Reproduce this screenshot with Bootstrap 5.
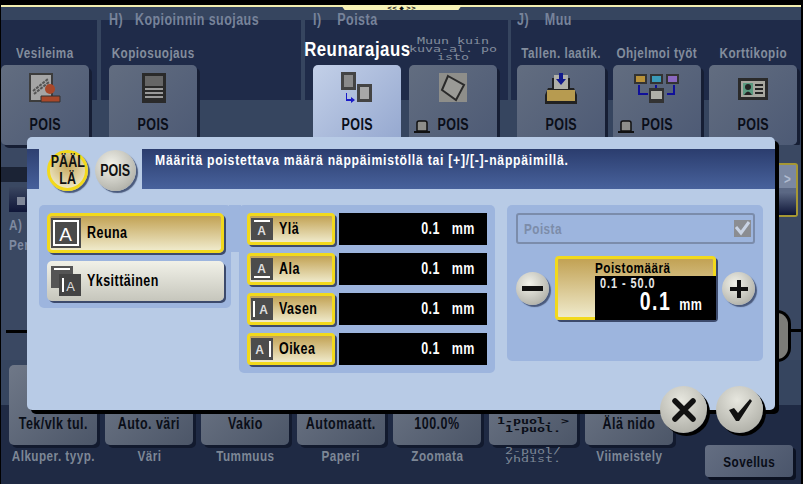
<!DOCTYPE html>
<html lang="fi">
<head>
<meta charset="UTF-8">
<title>Reunarajaus</title>
<link href="https://cdn.jsdelivr.net/npm/bootstrap@5.3.3/dist/css/bootstrap.min.css" rel="stylesheet">
<style>
  html, body { margin: 0; width: 803px; height: 484px; overflow: hidden; background: #000; }
  body { font-family: "Liberation Sans", sans-serif; font-weight: 700; font-size: 15px; letter-spacing: .6px; line-height: 1; }
  /* no narrow face installed, so the panel font is squeezed */
  .tx { display: inline-block; flex: none; white-space: nowrap; transform: scaleX(.78); }
  .tx-l { transform-origin: left center; }
  .tx-r { transform-origin: right center; }
  .screen { position: relative; width: 801px; height: 484px; padding-left: 1px; padding-top: 5px; background: #000; }
  .topline { height: 2px; background: #f3eeb0; }
  .handle { position: absolute; left: 341px; top: 5px; width: 121px; height: 5px; background: #f7f2b4; clip-path: polygon(0 0, 100% 0, 97% 100%, 3% 100%); color: #111; font: 700 6px/5px "DejaVu Sans", sans-serif; letter-spacing: 0; text-align: center; }
  .uplayer { height: 138px; background: #36455f; }
  .tabgrp { height: 138px; background: linear-gradient(#36455f 0 13px, #1f2b49 13px 93px, transparent 93px); }
  .g0 { width: 96px; } .g1 { width: 200px; margin-left: 4px; padding-left: 8px; } .g2 { width: 203px; margin-left: 4px; padding-left: 8px; } .g3 { width: 290px; margin-left: 3px; padding-left: 6px; }
  .grphead { height: 27px; color: #77839a; font-size: 16px; padding-top: 5px; }
  .fcol { width: 88px; flex: none; }
  .funcname { height: 31px; color: #838d9d; display: flex; justify-content: center; padding-top: 11px; }
  .funcname.active { color: #fff; font-size: 20px; padding-top: 5px; }
  .funcname.active .tx { transform: scaleX(.84); }
  .funcname.pix { display: block; text-align: center; font: 400 9px/8px "DejaVu Sans Mono", monospace; letter-spacing: 0; padding-top: 3px; color: #838d9d; transform: scaleX(1.48); }
  .funcbtn { width: 88px; height: 80px; border-radius: 5px; background: linear-gradient(135deg, #626d80, #4d5a75); box-shadow: 3px 3px 0 #161e34; color: #0a0e18; font-size: 16px; position: relative; padding-top: 7px; }
  .funcbtn.active { background: linear-gradient(135deg, #c3d0e8, #94a7cf); box-shadow: none; }
  .funcbtn svg { display: block; margin: 0 auto; }
  .funcbtn .lbl { position: absolute; left: 0; right: 0; top: 52px; display: flex; justify-content: center; }
  .funcbtn .stamp { position: absolute; left: 4px; top: 54px; margin: 0; }
  .midlayer { height: 215px; }
  .leftcol { width: 26px; background: #3a4862; color: #7f8aa0; }
  .leftbar { height: 15px; margin-top: 22px; background: #1b2335; }
  .leftbtn { height: 25px; margin: 5px 0 0 8px; background: linear-gradient(#3a4660, #0f1638); padding: 10px 0 0 8px; }
  .leftbtn i { display: block; width: 8px; height: 8px; background: #7f8798; }
  .lefttxt { padding: 5px 0 0 8px; height: 17px; }
  .lefttxt + .lefttxt { height: 26px; padding-top: 8px; }
  .leftblack { height: 3px; background: #000; margin: 75px 0 0 5px; }
  .midcenter { width: 750px; background: #36455f; }
  .rightcol { width: 24px; background: #3a4862; position: relative; }
  .rightbtn { width: 19px; height: 54px; margin: 18px 0 0 2px; border: 2px solid #a59734; border-left: 0; border-radius: 0 3px 3px 0; background: linear-gradient(#7b88a2 0 45%, #5b6884 45% 55%, #0f1638); color: #b0bbd0; display: flex; justify-content: center; padding-top: 6px; }
  .rightknob { position: absolute; left: 0; top: 165px; width: 14px; height: 52px; background: #7c7c78; border: solid #000; border-width: 3px 3px 3px 0; border-radius: 0 26px 26px 0; }
  .rightline { position: absolute; left: 14px; right: 0; top: 184px; height: 3px; background: #000; }
  .botlayer { height: 124px; background: linear-gradient(#36455f 0 45px, #1f2a44 45px); padding-left: 8px; }
  .setcol { width: 88px; margin-right: 8px; flex: none; padding-top: 5px; }
  .setbtn { height: 80px; border-radius: 5px; background: linear-gradient(135deg, #6f7888, #4c5668); box-shadow: 3px 3px 0 #121a2e; color: #0a0e18; font-size: 16px; display: flex; justify-content: center; padding-top: 51px; }
  .setbtn.pix { display: block; text-align: center; font: 700 9px/8px "DejaVu Sans Mono", monospace; padding-top: 52px; letter-spacing: 0; }
  .setbtn.pix div { transform: scaleX(1.48); }
  .setname { color: #7d8796; display: flex; justify-content: center; padding-top: 3px; font-size: 15px; }
  .setname.pix { display: block; text-align: center; font: 400 9px/8px "DejaVu Sans Mono", monospace; letter-spacing: 0; padding-top: 2px; transform: scaleX(1.48); }
  .applybtn { width: 88px; height: 32px; margin: 85px 0 0 24px; flex: none; border-radius: 4px; background: linear-gradient(135deg, #646e82, #4a556b); box-shadow: 3px 3px 0 #0c1222; color: #080c16; display: flex; justify-content: center; padding-top: 9px; font-size: 15px; }

  /* dialog lies over the function screen */
  .dialogbox { position: absolute; left: 27px; top: 137px; width: 748px; height: 273px; background: #b8cbe6; border-radius: 5px; box-shadow: 4px 4px 0 #000; padding-top: 12px; }
  .dlghead { height: 40px; }
  .headstub { width: 12px; background: linear-gradient(#2e4071, #46609b); }
  .headgap { width: 103px; }
  .headtext { flex: 1; background: linear-gradient(#2b3d6e, #48629c); color: #fff; padding: 4px 0 0 13px; font-size: 14.5px; letter-spacing: .9px; }
  .headtext .tx { transform: scaleX(.84); }
  .roundbtn { position: absolute; border-radius: 50%; background: radial-gradient(circle at 40% 35%, #f2f2ea, #b8b8b0 70%, #95958e); box-shadow: 2px 2px 1px #4a5a7c; color: #111; display: flex; align-items: center; justify-content: center; text-align: center; }
  .tg-on { left: 20px; top: 13px; width: 41px; height: 41px; border: 3px solid #f2d91c; background: radial-gradient(circle at 50% 35%, #c4a65a, #f0ebcc 85%); font-size: 16px; letter-spacing: 0; flex-direction: column; line-height: 1.05; }
  .tg-off { left: 68px; top: 13px; width: 41px; height: 41px; font-size: 16px; letter-spacing: 0; }
  .dlgbody { padding: 16px 0 0 12px; }
  .panelbox { background: #9db5de; border-radius: 5px; }
  .p-left { width: 192px; height: 103px; padding: 8px 8px; position: relative; }
  .p-left::after { content: ""; position: absolute; left: 190px; top: 0; width: 12px; height: 47px; background: #9db5de; }
  .p-mid { width: 256px; height: 168px; margin-left: 8px; padding: 8px; position: relative; }
  .p-right { width: 256px; height: 156px; margin-left: 12px; padding: 8px 8px 0 9px; position: relative; }
  .modebtn { width: 177px; height: 40px; border-radius: 5px; display: flex; align-items: center; gap: 6px; padding-left: 4px; box-shadow: 2px 2px 0 #3c4a6c; color: #000; font-size: 16px; }
  .modebtn.sel { border: 3px solid #f2d91c; background: linear-gradient(#c2a254, #efeacb); padding-left: 1px; }
  .modebtn.off { margin-top: 8px; background: linear-gradient(#f1f1e8, #c6c6bc); }
  .siderow { height: 32px; margin-bottom: 8px; gap: 4px; }
  .sidebtn { width: 88px; height: 32px; border: 3px solid #f2d91c; border-radius: 4px; background: linear-gradient(#c2a254, #efeacb); box-shadow: 2px 2px 0 #3c4a6c; display: flex; align-items: center; gap: 6px; padding-left: 1px; color: #000; font-size: 16px; }
  .sidebtn svg { flex: none; }
  .sideval { width: 148px; height: 32px; background: #000; color: #fff; display: flex; align-items: center; justify-content: flex-end; padding-right: 12px; font-size: 16px; }
  .erasechk { height: 31px; border: 2px solid #7b8cab; border-radius: 3px; color: #7c8ca9; display: flex; align-items: center; justify-content: space-between; padding: 0 2px 0 6px; font-size: 15px; width: 239px; }
  .amountbox { position: absolute; left: 48px; top: 51px; width: 161px; height: 64px; background: linear-gradient(#c2a254, #efeacb); border: 3px solid #f2d91c; border-radius: 4px; box-shadow: 2px 2px 0 #3c4a6c; }
  .amounttitle { position: absolute; left: 37px; top: 1px; color: #000; font-size: 15px; }
  .amountfield { position: absolute; left: 37px; top: 17px; right: -3px; bottom: -3px; background: #000; color: #fff; }
  .amountrange { position: absolute; left: 5px; top: 0; font-size: 14px; letter-spacing: 1.2px; color: #e6e6e6; }
  .amountval { position: absolute; right: 14px; top: 13px; font-size: 25px; letter-spacing: 2px; }
  .amountval small { font-size: 16px; font-weight: 700; margin-left: 10px; letter-spacing: .6px; }
  .rb-minus { left: 9px; top: 67px; width: 33px; height: 33px; }
  .rb-plus { left: 215px; top: 67px; width: 33px; height: 33px; }
  .rb-cancel { left: 633px; top: 249px; width: 47px; height: 47px; box-shadow: 3px 3px 0 #000; background: radial-gradient(circle at 45% 30%, #e6e6de, #b4b4ac 75%, #8f8f88); }
  .rb-ok { left: 689px; top: 249px; width: 47px; height: 47px; box-shadow: 3px 3px 0 #000; background: radial-gradient(circle at 45% 30%, #e6e6de, #b4b4ac 75%, #8f8f88); }
</style>
</head>
<body>
<div class="screen">
  <div class="topline"></div>
  <div class="handle">&lt;&lt; ◆ &gt;&gt;</div>

  <div class="uplayer d-flex">
    <div class="tabgrp g0">
      <div class="grphead"></div>
      <div class="fcol">
        <div class="funcname"><span class="tx">Vesileima</span></div>
        <div class="funcbtn">
          <svg width="34" height="32" viewBox="0 0 34 32"><rect x="1" y="1" width="24" height="29" fill="#3c3c3c"/><rect x="3" y="3" width="20" height="25" fill="#a5a5a5"/><path d="M5 19l15-12M6 22l15-12" stroke="#555" stroke-width="2" stroke-dasharray="3 1"/><circle cx="22" cy="17" r="5" fill="#a8482a"/><path d="M13 30v-6h19v6z" fill="#a8482a" stroke="#333"/></svg>
          <div class="lbl"><span class="tx">POIS</span></div>
        </div>
      </div>
    </div>
    <div class="tabgrp g1">
      <div class="grphead"><span class="tx tx-l">H)&nbsp;&nbsp; Kopioinnin suojaus</span></div>
      <div class="fcol">
        <div class="funcname"><span class="tx">Kopiosuojaus</span></div>
        <div class="funcbtn">
          <svg width="34" height="32" viewBox="0 0 34 32"><rect x="6" y="1" width="24" height="30" fill="#2a2a2a"/><rect x="9" y="4" width="18" height="10" fill="#666"/><path d="M9 17h18M9 21h18M9 25h18" stroke="#999" stroke-width="2"/></svg>
          <div class="lbl"><span class="tx">POIS</span></div>
        </div>
      </div>
    </div>
    <div class="tabgrp g2">
      <div class="grphead"><span class="tx tx-l">I)&nbsp;&nbsp;&nbsp; Poista</span></div>
      <div class="d-flex column-gap-2">
        <div class="fcol">
          <div class="funcname active"><span class="tx">Reunarajaus</span></div>
          <div class="funcbtn active">
            <svg width="34" height="32" viewBox="0 0 34 32"><rect x="1" y="0" width="15" height="18" fill="#444"/><rect x="4" y="3" width="9" height="12" fill="#8a8a8a"/><rect x="17" y="12" width="15" height="18" fill="#444"/><rect x="20" y="15" width="9" height="12" fill="#a8a8a8"/><path d="M7 21v6h4v-2l4 3-4 3v-2H6v-8z" fill="#1a1ac8"/></svg>
            <div class="lbl"><span class="tx">POIS</span></div>
          </div>
        </div>
        <div class="fcol">
          <div class="funcname pix">Muun kuin<br>kuva-al. po<br>isto</div>
          <div class="funcbtn">
            <svg width="34" height="32" viewBox="0 0 34 32"><rect x="3" y="1" width="28" height="29" fill="#8e8e8a"/><path d="M12 4l16 9-8 15L6 18z" fill="#9a9a96" stroke="#2a2a2a" stroke-width="2"/></svg>
            <svg class="stamp" width="18" height="16" viewBox="0 0 18 16"><path d="M4 12V4q0-2 2-2h6q2 0 2 2v8z" fill="#8e8e8a" stroke="#111" stroke-width="1.5"/><path d="M1 13h16" stroke="#111" stroke-width="2"/></svg>
            <div class="lbl"><span class="tx">POIS</span></div>
          </div>
        </div>
      </div>
    </div>
    <div class="tabgrp g3">
      <div class="grphead"><span class="tx tx-l">J)&nbsp;&nbsp;&nbsp; Muu</span></div>
      <div class="d-flex column-gap-2">
        <div class="fcol">
          <div class="funcname"><span class="tx">Tallen. laatik.</span></div>
          <div class="funcbtn">
            <svg width="34" height="32" viewBox="0 0 34 32"><path d="M8 6h18v10h4l3 7v9H1v-9l3-7h4z" fill="#222"/><rect x="10" y="3" width="14" height="14" fill="#b0b0a8"/><rect x="3" y="18" width="28" height="11" fill="#b79b50"/><path d="M15 1h4v6h3l-5 6-5-6h3z" fill="#121a8c"/></svg>
            <div class="lbl"><span class="tx">POIS</span></div>
          </div>
        </div>
        <div class="fcol">
          <div class="funcname"><span class="tx">Ohjelmoi työt</span></div>
          <div class="funcbtn">
            <svg width="48" height="32" viewBox="0 0 48 32"><rect x="1" y="2" width="13" height="10" fill="#333"/><rect x="3" y="4" width="9" height="6" fill="#b8923a"/><rect x="17" y="2" width="13" height="10" fill="#333"/><rect x="19" y="4" width="9" height="6" fill="#3a9ab8"/><rect x="33" y="2" width="13" height="10" fill="#333"/><rect x="35" y="4" width="9" height="6" fill="#8a68c0"/><path d="M6 13v9h9M41 13v9h-7M23 13v3" stroke="#10109a" stroke-width="2" fill="none"/><rect x="16" y="16" width="15" height="15" fill="#333"/><rect x="18" y="19" width="11" height="8" fill="#b0b0a8"/></svg>
            <svg class="stamp" width="18" height="16" viewBox="0 0 18 16"><path d="M4 12V4q0-2 2-2h6q2 0 2 2v8z" fill="#8e8e8a" stroke="#111" stroke-width="1.5"/><path d="M1 13h16" stroke="#111" stroke-width="2"/></svg>
            <div class="lbl"><span class="tx">POIS</span></div>
          </div>
        </div>
        <div class="fcol">
          <div class="funcname"><span class="tx">Korttikopio</span></div>
          <div class="funcbtn">
            <svg width="34" height="32" viewBox="0 0 34 32"><rect x="2" y="6" width="30" height="22" fill="#2a2a2a"/><rect x="5" y="9" width="24" height="16" fill="#a8a8a0"/><rect x="7" y="11" width="10" height="12" fill="#5a9a80"/><circle cx="12" cy="15" r="3" fill="#222"/><path d="M8 23q4-7 8 0z" fill="#222"/><path d="M19 13h8M19 17h8M19 21h8" stroke="#222" stroke-width="2"/></svg>
            <div class="lbl"><span class="tx">POIS</span></div>
          </div>
        </div>
      </div>
    </div>
  </div>

  <div class="midlayer d-flex">
    <div class="leftcol">
      <div class="leftbar"></div>
      <div class="leftbtn"><i></i></div>
      <div class="lefttxt"><span class="tx tx-l">A)</span></div>
      <div class="lefttxt"><span class="tx tx-l">Per</span></div>
      <div class="leftblack"></div>
    </div>
    <div class="midcenter"></div>
    <div class="rightcol">
      <div class="rightbtn"><span class="tx">&gt;</span></div>
      <div class="rightknob"></div>
      <div class="rightline"></div>
    </div>
  </div>

  <div class="botlayer d-flex">
    <div class="setcol"><div class="setbtn"><span class="tx">Tek/vlk tul.</span></div><div class="setname"><span class="tx">Alkuper. tyyp.</span></div></div>
    <div class="setcol"><div class="setbtn"><span class="tx">Auto. väri</span></div><div class="setname"><span class="tx">Väri</span></div></div>
    <div class="setcol"><div class="setbtn"><span class="tx">Vakio</span></div><div class="setname"><span class="tx">Tummuus</span></div></div>
    <div class="setcol"><div class="setbtn"><span class="tx">Automaatt.</span></div><div class="setname"><span class="tx">Paperi</span></div></div>
    <div class="setcol"><div class="setbtn"><span class="tx">100.0%</span></div><div class="setname"><span class="tx">Zoomata</span></div></div>
    <div class="setcol"><div class="setbtn pix"><div>1-puol. &gt;<br>1-puol.</div></div><div class="setname pix">2-puol/<br>yhdist.</div></div>
    <div class="setcol"><div class="setbtn"><span class="tx">Älä nido</span></div><div class="setname"><span class="tx">Viimeistely</span></div></div>
    <div class="applybtn"><span class="tx">Sovellus</span></div>
  </div>

  <div class="dialogbox">
    <div class="dlghead d-flex">
      <div class="headstub"></div>
      <div class="headgap"></div>
      <div class="headtext"><span class="tx tx-l">Määritä poistettava määrä näppäimistöllä tai [+]/[-]-näppäimillä.</span></div>
    </div>
    <div class="roundbtn tg-on"><span class="tx">PÄÄL</span><span class="tx">LÄ</span></div>
    <div class="roundbtn tg-off"><span class="tx">POIS</span></div>

    <div class="dlgbody d-flex align-items-start">
      <div class="panelbox p-left">
        <div class="modebtn sel">
          <svg width="30" height="30" viewBox="0 0 30 30"><rect width="30" height="30" fill="#4a4a4a"/><rect x="3" y="3" width="24" height="24" fill="none" stroke="#fff" stroke-width="2"/><text x="15" y="23" text-anchor="middle" font-size="19" font-weight="400" fill="#fff" font-family="Liberation Sans">A</text></svg>
          <span class="tx tx-l">Reuna</span>
        </div>
        <div class="modebtn off">
          <svg width="30" height="30" viewBox="0 0 30 30"><rect width="22" height="22" fill="#555"/><path d="M3 3h16" stroke="#fff" stroke-width="2"/><rect x="8" y="8" width="22" height="22" fill="#444"/><path d="M12 12v14" stroke="#fff" stroke-width="2"/><text x="20" y="25" text-anchor="middle" font-size="13" font-weight="400" fill="#ddd" font-family="Liberation Sans">A</text></svg>
          <span class="tx tx-l">Yksittäinen</span>
        </div>
      </div>

      <div class="panelbox p-mid">
        <div class="d-flex siderow">
          <div class="sidebtn">
            <svg width="22" height="22" viewBox="0 0 22 22"><rect width="22" height="22" fill="#4c4c4c"/><path d="M3 3h16" stroke="#fff" stroke-width="2"/><text x="11" y="17" text-anchor="middle" font-size="12" font-weight="700" fill="#ddd" font-family="Liberation Sans">A</text></svg>
            <span class="tx tx-l">Ylä</span>
          </div>
          <div class="sideval"><span class="tx tx-r">0.1&nbsp;&nbsp; mm</span></div>
        </div>
        <div class="d-flex siderow">
          <div class="sidebtn">
            <svg width="22" height="22" viewBox="0 0 22 22"><rect width="22" height="22" fill="#4c4c4c"/><path d="M3 19h16" stroke="#fff" stroke-width="2"/><text x="11" y="15" text-anchor="middle" font-size="12" font-weight="700" fill="#ddd" font-family="Liberation Sans">A</text></svg>
            <span class="tx tx-l">Ala</span>
          </div>
          <div class="sideval"><span class="tx tx-r">0.1&nbsp;&nbsp; mm</span></div>
        </div>
        <div class="d-flex siderow">
          <div class="sidebtn">
            <svg width="22" height="22" viewBox="0 0 22 22"><rect width="22" height="22" fill="#4c4c4c"/><path d="M3 3v16" stroke="#fff" stroke-width="2"/><text x="13" y="16" text-anchor="middle" font-size="12" font-weight="700" fill="#ddd" font-family="Liberation Sans">A</text></svg>
            <span class="tx tx-l">Vasen</span>
          </div>
          <div class="sideval"><span class="tx tx-r">0.1&nbsp;&nbsp; mm</span></div>
        </div>
        <div class="d-flex siderow">
          <div class="sidebtn">
            <svg width="22" height="22" viewBox="0 0 22 22"><rect width="22" height="22" fill="#4c4c4c"/><path d="M19 3v16" stroke="#fff" stroke-width="2"/><text x="9" y="16" text-anchor="middle" font-size="12" font-weight="700" fill="#ddd" font-family="Liberation Sans">A</text></svg>
            <span class="tx tx-l">Oikea</span>
          </div>
          <div class="sideval"><span class="tx tx-r">0.1&nbsp;&nbsp; mm</span></div>
        </div>
      </div>

      <div class="panelbox p-right">
        <div class="erasechk">
          <span class="tx tx-l">Poista</span>
          <svg width="17" height="17" viewBox="0 0 17 17"><rect width="17" height="17" fill="#8b8d92"/><path d="M2 7l5 6 8-11" fill="none" stroke="#c9d3e4" stroke-width="3"/></svg>
        </div>
        <div class="roundbtn rb-minus"><svg width="21" height="5" viewBox="0 0 21 5"><rect width="21" height="5" fill="#111"/></svg></div>
        <div class="amountbox">
          <div class="amounttitle"><span class="tx tx-l">Poistomäärä</span></div>
          <div class="amountfield">
            <div class="amountrange"><span class="tx tx-l">0.1 - 50.0</span></div>
            <div class="amountval"><span class="tx tx-r">0.1<small>mm</small></span></div>
          </div>
        </div>
        <div class="roundbtn rb-plus"><svg width="20" height="20" viewBox="0 0 20 20"><path d="M10 1v18M1 10h18" stroke="#111" stroke-width="4"/></svg></div>
      </div>
    </div>

    <div class="roundbtn rb-cancel"><svg width="26" height="26" viewBox="0 0 26 26"><path d="M4 4l18 18M22 4L4 22" stroke="#111" stroke-width="5.5" stroke-linecap="round"/></svg></div>
    <div class="roundbtn rb-ok"><svg width="26" height="24" viewBox="0 0 26 24"><path d="M2 12l5-2 4 5L23 1l2 2-13 20H9z" fill="#111"/></svg></div>
  </div>
</div>
<script src="https://cdn.jsdelivr.net/npm/bootstrap@5.3.3/dist/js/bootstrap.bundle.min.js"></script>
</body>
</html>
